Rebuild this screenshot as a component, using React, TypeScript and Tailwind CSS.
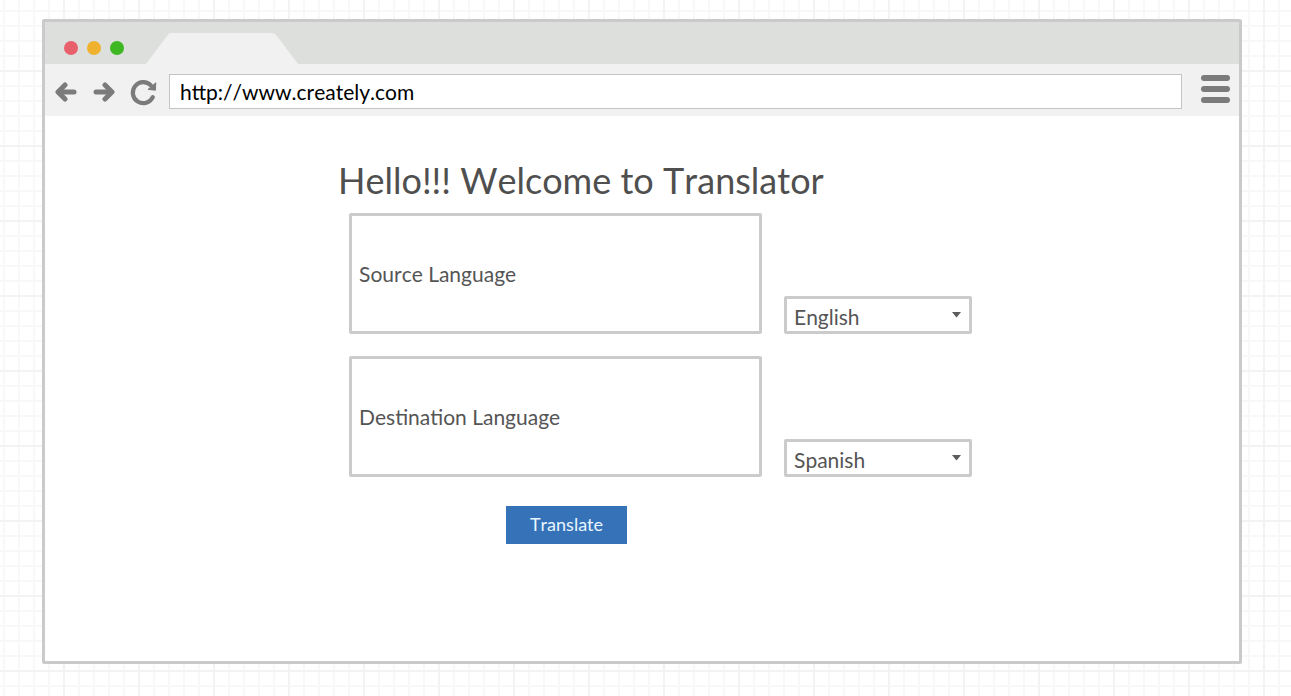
import { ReactNode } from "react";

function Light({ label, className }: { label: string; className: string }) {
  return <button type="button" aria-label={label} className={`size-[14px] rounded-full ${className}`} />;
}

function ToolButton({ label, children }: { label: string; children: ReactNode }) {
  return (
    <button type="button" aria-label={label} className="shrink-0 text-[#7b7b7b]">
      {children}
    </button>
  );
}

function ArrowIcon({ flip = false }: { flip?: boolean }) {
  return (
    <svg
      viewBox="0 0 22 22"
      className={flip ? "size-[22px] -scale-x-100" : "size-[22px]"}
      fill="none"
      stroke="currentColor"
      strokeWidth="5"
      strokeLinecap="round"
      strokeLinejoin="round"
    >
      <path d="M19 11H4" />
      <path d="M10 4 3 11l7 7" />
    </svg>
  );
}

function ReloadIcon() {
  return (
    <svg viewBox="0 0 26 26" className="size-[26px] overflow-visible">
      <path
        d="M21.8 18.2A10.5 10.5 0 1 1 19.9 6.4"
        fill="none"
        stroke="currentColor"
        strokeWidth="4.2"
        strokeLinecap="round"
      />
      <path d="M24.8 3.8 24.4 11.2 17 10.4Z" fill="currentColor" stroke="currentColor" strokeLinejoin="round" />
    </svg>
  );
}

function LanguageRow({
  id,
  label,
  language,
  options,
}: {
  id: string;
  label: string;
  language: string;
  options: string[];
}) {
  return (
    <div className="flex items-end gap-[22px]">
      <input
        id={id}
        type="text"
        aria-label={label}
        placeholder={label}
        className="h-[121px] w-[413px] rounded-xs border-3 border-[#cbcbcb] bg-white px-[7px] text-[21px] text-[#555] outline-none placeholder:text-[#555] placeholder:opacity-100"
      />
      <div className="grid w-[188px] items-center">
        <select
          aria-label={`${label} choice`}
          defaultValue={language}
          className="col-start-1 row-start-1 h-[38px] w-full appearance-none rounded-xs border-3 border-[#cbcbcb] bg-white pt-1 pl-[7px] text-[21px] leading-7 text-[#555] outline-none"
        >
          {options.map((option) => (
            <option key={option}>{option}</option>
          ))}
        </select>
        <svg viewBox="0 0 10 6" className="pointer-events-none col-start-1 row-start-1 mr-[10px] h-[6px] w-[10px] justify-self-end">
          <path d="M0 0h9L4.5 5.5Z" fill="#5c5c5c" />
        </svg>
      </div>
    </div>
  );
}

const languages = ["English", "Spanish", "French", "German"];

const paper =
  "bg-[linear-gradient(to_right,#f3f3f3_2px,transparent_2px),linear-gradient(to_bottom,#f3f3f3_2px,transparent_2px),linear-gradient(to_right,#f8f8f8_2px,transparent_2px),linear-gradient(to_bottom,#f8f8f8_2px,transparent_2px)] bg-size-[75px_75px,75px_75px,15px_15px,15px_15px] bg-position-[63px_70px,63px_70px,3px_10px,3px_10px]";

export default function App() {
  return (
    <div className={`flex min-h-screen flex-col bg-white pt-[19px] pr-[49px] pb-8 pl-[42px] font-['Lato',sans-serif] [font-kerning:none] ${paper}`}>
      <div className="flex grow flex-col rounded-xs border-3 border-[#c9cac9] bg-white">
        <div className="flex h-[42px] items-end bg-[#dddfdc] pl-[19px]">
          <div className="flex gap-[9px] pb-[9px]">
            <Light label="Close" className="bg-[#e8606b]" />
            <Light label="Minimize" className="bg-[#efb22f]" />
            <Light label="Maximize" className="bg-[#3db722]" />
          </div>
          <svg viewBox="0 0 152 31" className="ml-[22px] h-[31px] w-[152px]">
            <path d="M0 31 21 3Q23 0 25 0H126Q129 0 131 3L152 31Z" fill="#f1f1f1" />
          </svg>
        </div>
        <header className="flex h-[52px] items-center bg-[#f1f1f1] pt-[3px] pr-[9px] pl-[10px]">
          <nav className="flex items-center gap-4">
            <ToolButton label="Back">
              <ArrowIcon />
            </ToolButton>
            <ToolButton label="Forward">
              <ArrowIcon flip />
            </ToolButton>
            <ToolButton label="Reload">
              <ReloadIcon />
            </ToolButton>
          </nav>
          <input
            type="text"
            aria-label="Address"
            defaultValue="http://www.creately.com"
            className="ml-3 h-[35px] min-w-0 grow border border-[#c4c4c4] bg-white px-[10px] text-[21px] text-black outline-none"
          />
          <button type="button" aria-label="Menu" className="ml-[19px] flex w-[29px] flex-col gap-[5px] pb-[5px]">
            <span className="h-[6px] rounded-full bg-[#7b7b7b]" />
            <span className="h-[6px] rounded-full bg-[#7b7b7b]" />
            <span className="h-[6px] rounded-full bg-[#7b7b7b]" />
          </button>
        </header>
        <main className="flex flex-col pt-10 pl-[290px]">
          <h1 className="pl-[3px] text-[36px] leading-12 text-[#4f4f4f]">Hello!!! Welcome to Translator</h1>
          <form className="flex flex-col gap-[22px] pt-[9px] pl-[14px]" onSubmit={(event) => event.preventDefault()}>
            <LanguageRow id="source" label="Source Language" language="English" options={languages} />
            <LanguageRow id="destination" label="Destination Language" language="Spanish" options={languages} />
            <div className="flex pt-[7px] pl-[157px]">
              <button type="submit" className="h-[38px] w-[121px] bg-[#3572b8] pb-[2px] text-[18px] text-[#e9f6ff]">
                Translate
              </button>
            </div>
          </form>
        </main>
      </div>
    </div>
  );
}
